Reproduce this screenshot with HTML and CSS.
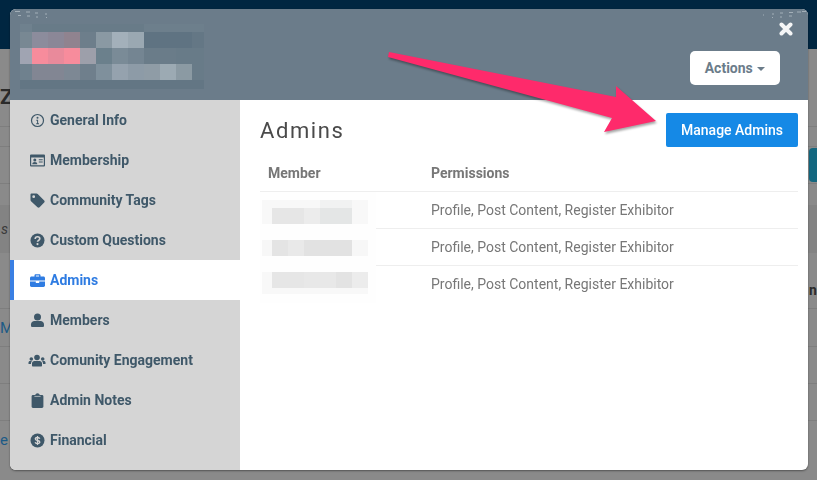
FILE: index.html
```html
<!DOCTYPE html>
<html lang="en">
<head>
  <meta charset="UTF-8" />
  <meta name="viewport" content="width=device-width, initial-scale=1.0"/>
  <title>Community Member - Admins</title>
  <link rel="stylesheet" href="styles.css">
</head>
<body>
  <!-- page behind the modal, only its edges show -->
  <div class="backdrop">
    <div class="topbar"></div>
    <div class="bg-row bg-title"><span class="bg-z">Z</span></div>
    <div class="bg-row bg-h20"></div>
    <div class="bg-row bg-h37"><span></span><span class="bg-teal"></span></div>
    <div class="bg-row bg-h21"></div>
    <div class="bg-row bg-band"><span class="bg-italic">s</span></div>
    <div class="bg-row bg-head"><span></span><span class="bg-bold">ns</span></div>
    <div class="bg-row bg-h38"><span class="bg-link">M</span></div>
    <div class="bg-row bg-h37"></div>
    <div class="bg-row bg-h37"></div>
    <div class="bg-row bg-last"><span class="bg-link">e</span></div>
  </div>

  <div class="modal">
    <div class="modal-header">
      <svg class="blur-name" width="184" height="65" viewBox="0 0 184 65" shape-rendering="crispEdges">
        <rect width="184" height="65" fill="#687b88"/>
        <rect x="0" y="0" width="12" height="8" fill="#6f818e"/>
        <rect x="12" y="0" width="112" height="8" fill="#65788600"/>
        <rect x="124" y="0" width="60" height="8" fill="#6d7f8c"/>
        <rect x="0" y="8" width="12" height="16" fill="#788893"/>
        <rect x="12" y="8" width="16" height="16" fill="#8c8c9c"/>
        <rect x="28" y="8" width="16" height="16" fill="#8b8797"/>
        <rect x="44" y="8" width="16" height="16" fill="#90838f"/>
        <rect x="60" y="8" width="16" height="16" fill="#6d7e8b"/>
        <rect x="76" y="8" width="16" height="16" fill="#8a99a3"/>
        <rect x="92" y="8" width="16" height="16" fill="#a3b0ba"/>
        <rect x="108" y="8" width="16" height="16" fill="#9aa8b2"/>
        <rect x="124" y="8" width="48" height="16" fill="#5f7382"/>
        <rect x="172" y="8" width="12" height="16" fill="#647785"/>
        <rect x="0" y="24" width="12" height="16" fill="#a0a4b2"/>
        <rect x="12" y="24" width="16" height="16" fill="#f78c9c"/>
        <rect x="28" y="24" width="16" height="16" fill="#e98a9b"/>
        <rect x="44" y="24" width="16" height="16" fill="#f78c9c"/>
        <rect x="60" y="24" width="16" height="16" fill="#9d9faa"/>
        <rect x="76" y="24" width="16" height="16" fill="#6b808c"/>
        <rect x="92" y="24" width="16" height="16" fill="#7a8b97"/>
        <rect x="108" y="24" width="16" height="16" fill="#748592"/>
        <rect x="124" y="24" width="32" height="16" fill="#6a7c89"/>
        <rect x="0" y="40" width="12" height="16" fill="#6f818e"/>
        <rect x="12" y="40" width="32" height="16" fill="#828693"/>
        <rect x="44" y="40" width="16" height="16" fill="#7d8894"/>
        <rect x="60" y="40" width="16" height="16" fill="#6f7f8c"/>
        <rect x="76" y="40" width="16" height="16" fill="#7f909c"/>
        <rect x="92" y="40" width="16" height="16" fill="#95a2ae"/>
        <rect x="108" y="40" width="16" height="16" fill="#8d9ba7"/>
        <rect x="124" y="40" width="16" height="16" fill="#8f9ca6"/>
        <rect x="140" y="40" width="16" height="16" fill="#9caab3"/>
        <rect x="156" y="40" width="16" height="16" fill="#8b9aa3"/>
        <rect x="0" y="56" width="184" height="9" fill="#637684"/>
      </svg>
      <button class="btn-actions">Actions <span class="caret"></span></button>
      <svg class="close" width="14" height="14" viewBox="0 0 14 14">
        <path d="M2.500 2.500 11.500 11.500M11.500 2.500 2.500 11.500" stroke="#f4f5f6" stroke-width="4" stroke-linecap="round"/>
      </svg>
      <!-- leftovers of the screenshot's rounded-corner cutout -->
      <svg class="marks marks-left" width="40" height="9" viewBox="0 0 40 9">
        <path d="M3 1.500h5M6 5.500h3M14 2h4M15 6h3M23 3h3M24 7h2M33 4h2M34 7.500h1" stroke="#a3afb8" stroke-width="1"/>
      </svg>
      <svg class="marks marks-right" width="46" height="9" viewBox="0 0 46 9">
        <path d="M41 1.500h4M36 2h4M28 2.500h4M28 6h3M19 3h3M19 7h2M11 4h2M11 7.500h1M2 5h1" stroke="#a3afb8" stroke-width="1"/>
      </svg>
    </div>

    <div class="modal-body">
      <ul class="sidenav">
        <li>
          <svg class="icon" viewBox="0 0 15 15"><circle cx="7.500" cy="7.500" r="6" fill="none" stroke="currentColor" stroke-width="1.200"/><circle cx="7.500" cy="4.800" r="1" fill="currentColor"/><path d="M6.300 6.800h1.800v3.400h.9v1H6.200v-1h.9V7.800h-.8z" fill="currentColor"/></svg>
          General Info
        </li>
        <li>
          <svg class="icon" viewBox="0 0 15 15"><path d="M1 1.500h13a1 1 0 0 1 1 1v10a1 1 0 0 1-1 1H1a1 1 0 0 1-1-1v-10a1 1 0 0 1 1-1zm.2 3v7.800h12.600V4.500z" fill="currentColor" fill-rule="evenodd"/><circle cx="4.800" cy="7" r="1.500" fill="currentColor"/><path d="M2.300 11.300c0-1.500 1-2.300 2.500-2.300s2.500.8 2.500 2.300zM8.800 6.200h3.900v1H8.800zM8.800 8.600h3.900v1H8.800z" fill="currentColor"/></svg>
          Membership
        </li>
        <li>
          <svg class="icon" viewBox="0 0 15 15"><path d="M1.400.500h5.200c.4 0 .8.200 1.100.5l6.500 6.500c.6.600.6 1.500 0 2.100l-4.600 4.600c-.6.600-1.500.6-2.100 0L1 8.200c-.3-.3-.5-.7-.5-1.100V1.400c0-.5.400-.9.900-.9zM3.700 2.300a1.400 1.400 0 1 0 0 2.800 1.400 1.400 0 0 0 0-2.800z" fill="currentColor" fill-rule="evenodd"/></svg>
          Community Tags
        </li>
        <li>
          <svg class="icon" viewBox="0 0 15 15"><circle cx="7.500" cy="7.500" r="7" fill="currentColor"/><path d="M5.200 5.900c0-1.300 1-2.100 2.300-2.100s2.300.8 2.300 2c0 1.500-2.300 1.500-2.300 3" fill="none" stroke="#d5d5d5" stroke-width="1.600"/><circle cx="7.500" cy="11.100" r="1.100" fill="#d5d5d5"/></svg>
          Custom Questions
        </li>
        <li class="active">
          <svg class="icon" viewBox="0 0 15 15"><path d="M4.500 3.500V2.300c0-.6.500-1.100 1.100-1.100h3.800c.6 0 1.100.5 1.100 1.100v1.200h3c.8 0 1.500.7 1.500 1.400V7.500H0V4.900c0-.7.700-1.400 1.500-1.400zM5.900 2.600v.9h3.200v-.9z" fill="currentColor" fill-rule="evenodd"/><path d="M0 8.500h5.800v1.400h3.400V8.500H15v4c0 .8-.7 1.400-1.500 1.400h-12C.7 13.900 0 13.300 0 12.500z" fill="currentColor"/></svg>
          Admins
        </li>
        <li>
          <svg class="icon" viewBox="0 0 15 15"><circle cx="7.500" cy="4" r="3.500" fill="currentColor"/><path d="M4.500 8h6c1.900 0 3.500 1.500 3.500 3.400v1.300c0 .8-.6 1.300-1.300 1.300H2.300C1.600 14 1 13.500 1 12.700v-1.300C1 9.500 2.600 8 4.500 8z" fill="currentColor"/></svg>
          Members
        </li>
        <li>
          <svg class="icon icon-wide" viewBox="0 0 18 15"><circle cx="9" cy="4.500" r="2.800" fill="currentColor"/><circle cx="3.300" cy="6" r="1.800" fill="currentColor"/><circle cx="14.700" cy="6" r="1.800" fill="currentColor"/><path d="M6.500 8h5c1.500 0 2.500 1 2.500 2.500V12.500c0 .6-.4 1-1 1H5c-.6 0-1-.4-1-1v-2C4 9 5 8 6.500 8zM.5 11V9.500c0-.9.700-1.500 1.500-1.500h1.900C3.300 8.700 3 9.500 3 10.500V11zM17.500 11V9.500c0-.9-.7-1.500-1.500-1.500h-1.900c.6.700.9 1.500.9 2.500V11z" fill="currentColor"/></svg>
          Comunity Engagement
        </li>
        <li>
          <svg class="icon" viewBox="0 0 15 15"><path d="M3 2h2.300C5.500 1 6.300.3 7.500.3S9.500 1 9.700 2H12c.8 0 1.400.6 1.400 1.400v10.200c0 .8-.6 1.400-1.400 1.400H3c-.8 0-1.400-.6-1.400-1.400V3.400C1.600 2.600 2.200 2 3 2z" fill="currentColor"/><path d="M4.400 3.400h6.200" stroke="#d5d5d5" stroke-width=".7"/></svg>
          Admin Notes
        </li>
        <li>
          <svg class="icon" viewBox="0 0 15 15"><circle cx="7.500" cy="7.500" r="7" fill="currentColor"/><path d="M9.800 5.700c-.3-.8-1.200-1.200-2.300-1.200-1.200 0-2.200.6-2.200 1.500 0 2 4.500 1 4.500 3 0 .9-1 1.500-2.300 1.500-1.200 0-2.100-.5-2.400-1.300M7.500 3v9" fill="none" stroke="#d5d5d5" stroke-width="1.300"/></svg>
          Financial
        </li>
      </ul>

      <div class="content">
        <div class="content-head">
          <h2>Admins</h2>
          <button class="btn-manage">Manage Admins</button>
        </div>
        <div class="table">
          <div class="row row-head">
            <div class="cell-member">Member</div>
            <div>Permissions</div>
          </div>
          <div class="row">
            <div class="cell-member">
              <svg class="blur-member" width="116" height="37" viewBox="0 0 116 37" shape-rendering="crispEdges">
                <rect width="116" height="37" fill="#fefefe"/>
                <rect x="2" y="8" width="106" height="24" fill="#f8f8f8"/>
                <rect x="12" y="16" width="32" height="16" fill="#e6e6e6"/>
                <rect x="44" y="16" width="16" height="16" fill="#ececec"/>
                <rect x="60" y="16" width="32" height="16" fill="#e4e6e6"/>
                <rect x="60" y="8" width="32" height="8" fill="#f1f2f2"/>
              </svg>
            </div>
            <div>Profile, Post Content, Register Exhibitor</div>
          </div>
          <div class="row">
            <div class="cell-member">
              <svg class="blur-member" width="116" height="37" viewBox="0 0 116 37" shape-rendering="crispEdges">
                <rect width="116" height="37" fill="#fefefe"/>
                <rect x="2" y="11" width="106" height="16" fill="#f7f7f7"/>
                <rect x="12" y="11" width="16" height="16" fill="#e4e4e4"/>
                <rect x="28" y="11" width="16" height="16" fill="#e9e9e9"/>
                <rect x="44" y="11" width="48" height="16" fill="#e2e2e2"/>
              </svg>
            </div>
            <div>Profile, Post Content, Register Exhibitor</div>
          </div>
          <div class="row">
            <div class="cell-member">
              <svg class="blur-member" width="116" height="37" viewBox="0 0 116 37" shape-rendering="crispEdges">
                <rect width="116" height="37" fill="#fefefe"/>
                <rect x="2" y="6" width="106" height="22" fill="#f8f8f8"/>
                <rect x="12" y="6" width="32" height="16" fill="#e6e6e6"/>
                <rect x="44" y="6" width="32" height="16" fill="#e8e8e8"/>
                <rect x="76" y="6" width="16" height="16" fill="#e3e3e3"/>
                <rect x="92" y="6" width="16" height="16" fill="#ececec"/>
              </svg>
            </div>
            <div>Profile, Post Content, Register Exhibitor</div>
          </div>
        </div>
      </div>
    </div>
  </div>

  <svg class="arrow" width="817" height="480" viewBox="0 0 817 480">
    <polygon points="389,52 616,97 616,86 656,121 604,132 612,118 388,57" fill="#fe2a6b"/>
  </svg>
</body>
</html>
```

FILE: styles.css
```css
html, body {
  margin: 0;
  padding: 0;
  height: 100%;
  overflow: hidden;
}

body {
  background: #8a8a8a;
  font-family: Roboto, 'Liberation Sans', sans-serif;
  font-size: 14px;
}

/* backdrop page */
.topbar {
  height: 49px;
  background: #002641;
}

.bg-row {
  display: flex;
  justify-content: space-between;
  align-items: center;
  box-sizing: border-box;
  border-bottom: 1px solid #7e7e7e;
  color: #2b2b2b;
}

.bg-title { height: 78px; align-items: flex-end; padding-bottom: 19px; }
.bg-h20 { height: 20px; }
.bg-h37 { height: 37px; }
.bg-h38 { height: 38px; }
.bg-h21 { height: 21px; border-bottom: 0; }
.bg-band { height: 48px; background: #838383; border-bottom: 0; }
.bg-head { height: 56px; align-items: flex-end; padding-bottom: 10px; }
.bg-last { height: 59px; align-items: flex-start; padding-top: 10px; border-bottom: 0; }

.bg-z { font-size: 21px; font-weight: 700; line-height: 20px; }
.bg-italic { font-style: italic; font-size: 14px; margin-left: 1px; color: #3a3a3a; }
.bg-bold { font-weight: 700; font-size: 14px; width: 8px; overflow: hidden; }
.bg-link { color: #1c5a86; font-size: 15px; }

.bg-teal {
  width: 8px;
  height: 34px;
  background: #13677f;
  border-radius: 4px 0 0 4px;
}

/* modal */
.modal {
  position: fixed;
  top: 9px;
  left: 10px;
  width: 798px;
  height: 461px;
  display: flex;
  flex-direction: column;
  background: white;
  border-radius: 6px;
  overflow: hidden;
  box-shadow: 0 1px 2px rgba(0,0,0,0.4);
}

.modal-header {
  position: relative;
  height: 91px;
  flex: none;
  box-sizing: border-box;
  padding: 15px 28px 15px 10px;
  display: flex;
  justify-content: space-between;
  align-items: flex-end;
  background: #6b7c8a;
}

.blur-name {
  display: block;
  align-self: flex-start;
}

.btn-actions {
  width: 90px;
  height: 34px;
  padding: 0;
  border: 0;
  border-radius: 5px;
  background: white;
  color: #6b7c8a;
  font-family: inherit;
  font-size: 14px;
  font-weight: 700;
}

.caret {
  display: inline-block;
  margin-left: 1px;
  vertical-align: middle;
  border-top: 4px solid #6b7c8a;
  border-left: 4px solid transparent;
  border-right: 4px solid transparent;
}

.close {
  position: absolute;
  top: 13px;
  right: 15px;
}

.marks {
  position: absolute;
  top: 1px;
}

.marks-left { left: 2px; }
.marks-right { right: 1px; }

.modal-body {
  flex: 1;
  display: flex;
}

/* side menu */
.sidenav {
  width: 230px;
  flex: none;
  margin: 0;
  padding: 0;
  list-style: none;
  background: #d5d5d5;
  color: #3f5869;
  font-weight: 700;
}

.sidenav li {
  height: 40px;
  box-sizing: border-box;
  padding-left: 20px;
  display: flex;
  align-items: center;
  gap: 5px;
}

.sidenav li.active {
  padding-left: 16px;
  border-left: 4px solid #3a7fe3;
  background: white;
  color: #2f7ce2;
}

.icon {
  width: 15px;
  height: 15px;
  flex: none;
}

.icon-wide {
  width: 18px;
  margin-left: -2px;
  margin-right: -1px;
}

/* main area */
.content {
  flex: 1;
  padding: 13px 10px 0 20px;
  color: #777;
}

.content-head {
  display: flex;
  justify-content: space-between;
  align-items: center;
  height: 34px;
  margin-bottom: 8px;
}

h2 {
  margin: 0;
  font-size: 22px;
  font-weight: 400;
  letter-spacing: 1.6px;
  color: #4a4a4a;
}

.btn-manage {
  width: 132px;
  height: 34px;
  padding: 0;
  border: 0;
  border-radius: 2px;
  background: #1589e6;
  color: white;
  font-family: inherit;
  font-size: 14px;
  font-weight: 500;
}

.row {
  display: flex;
  align-items: center;
  height: 37px;
  box-sizing: border-box;
  border-bottom: 1px solid #eee;
  padding-left: 8px;
}

.row:last-child {
  border-bottom-color: transparent;
}

.row-head {
  font-weight: 700;
}

.cell-member {
  width: 163px;
  flex: none;
}

.blur-member {
  display: block;
  margin-left: -8px;
}

/* annotation drawn on top of the screenshot */
.arrow {
  position: fixed;
  top: 0;
  left: 0;
  filter: drop-shadow(1px 2px 1px rgba(0,0,0,0.35));
}
```
